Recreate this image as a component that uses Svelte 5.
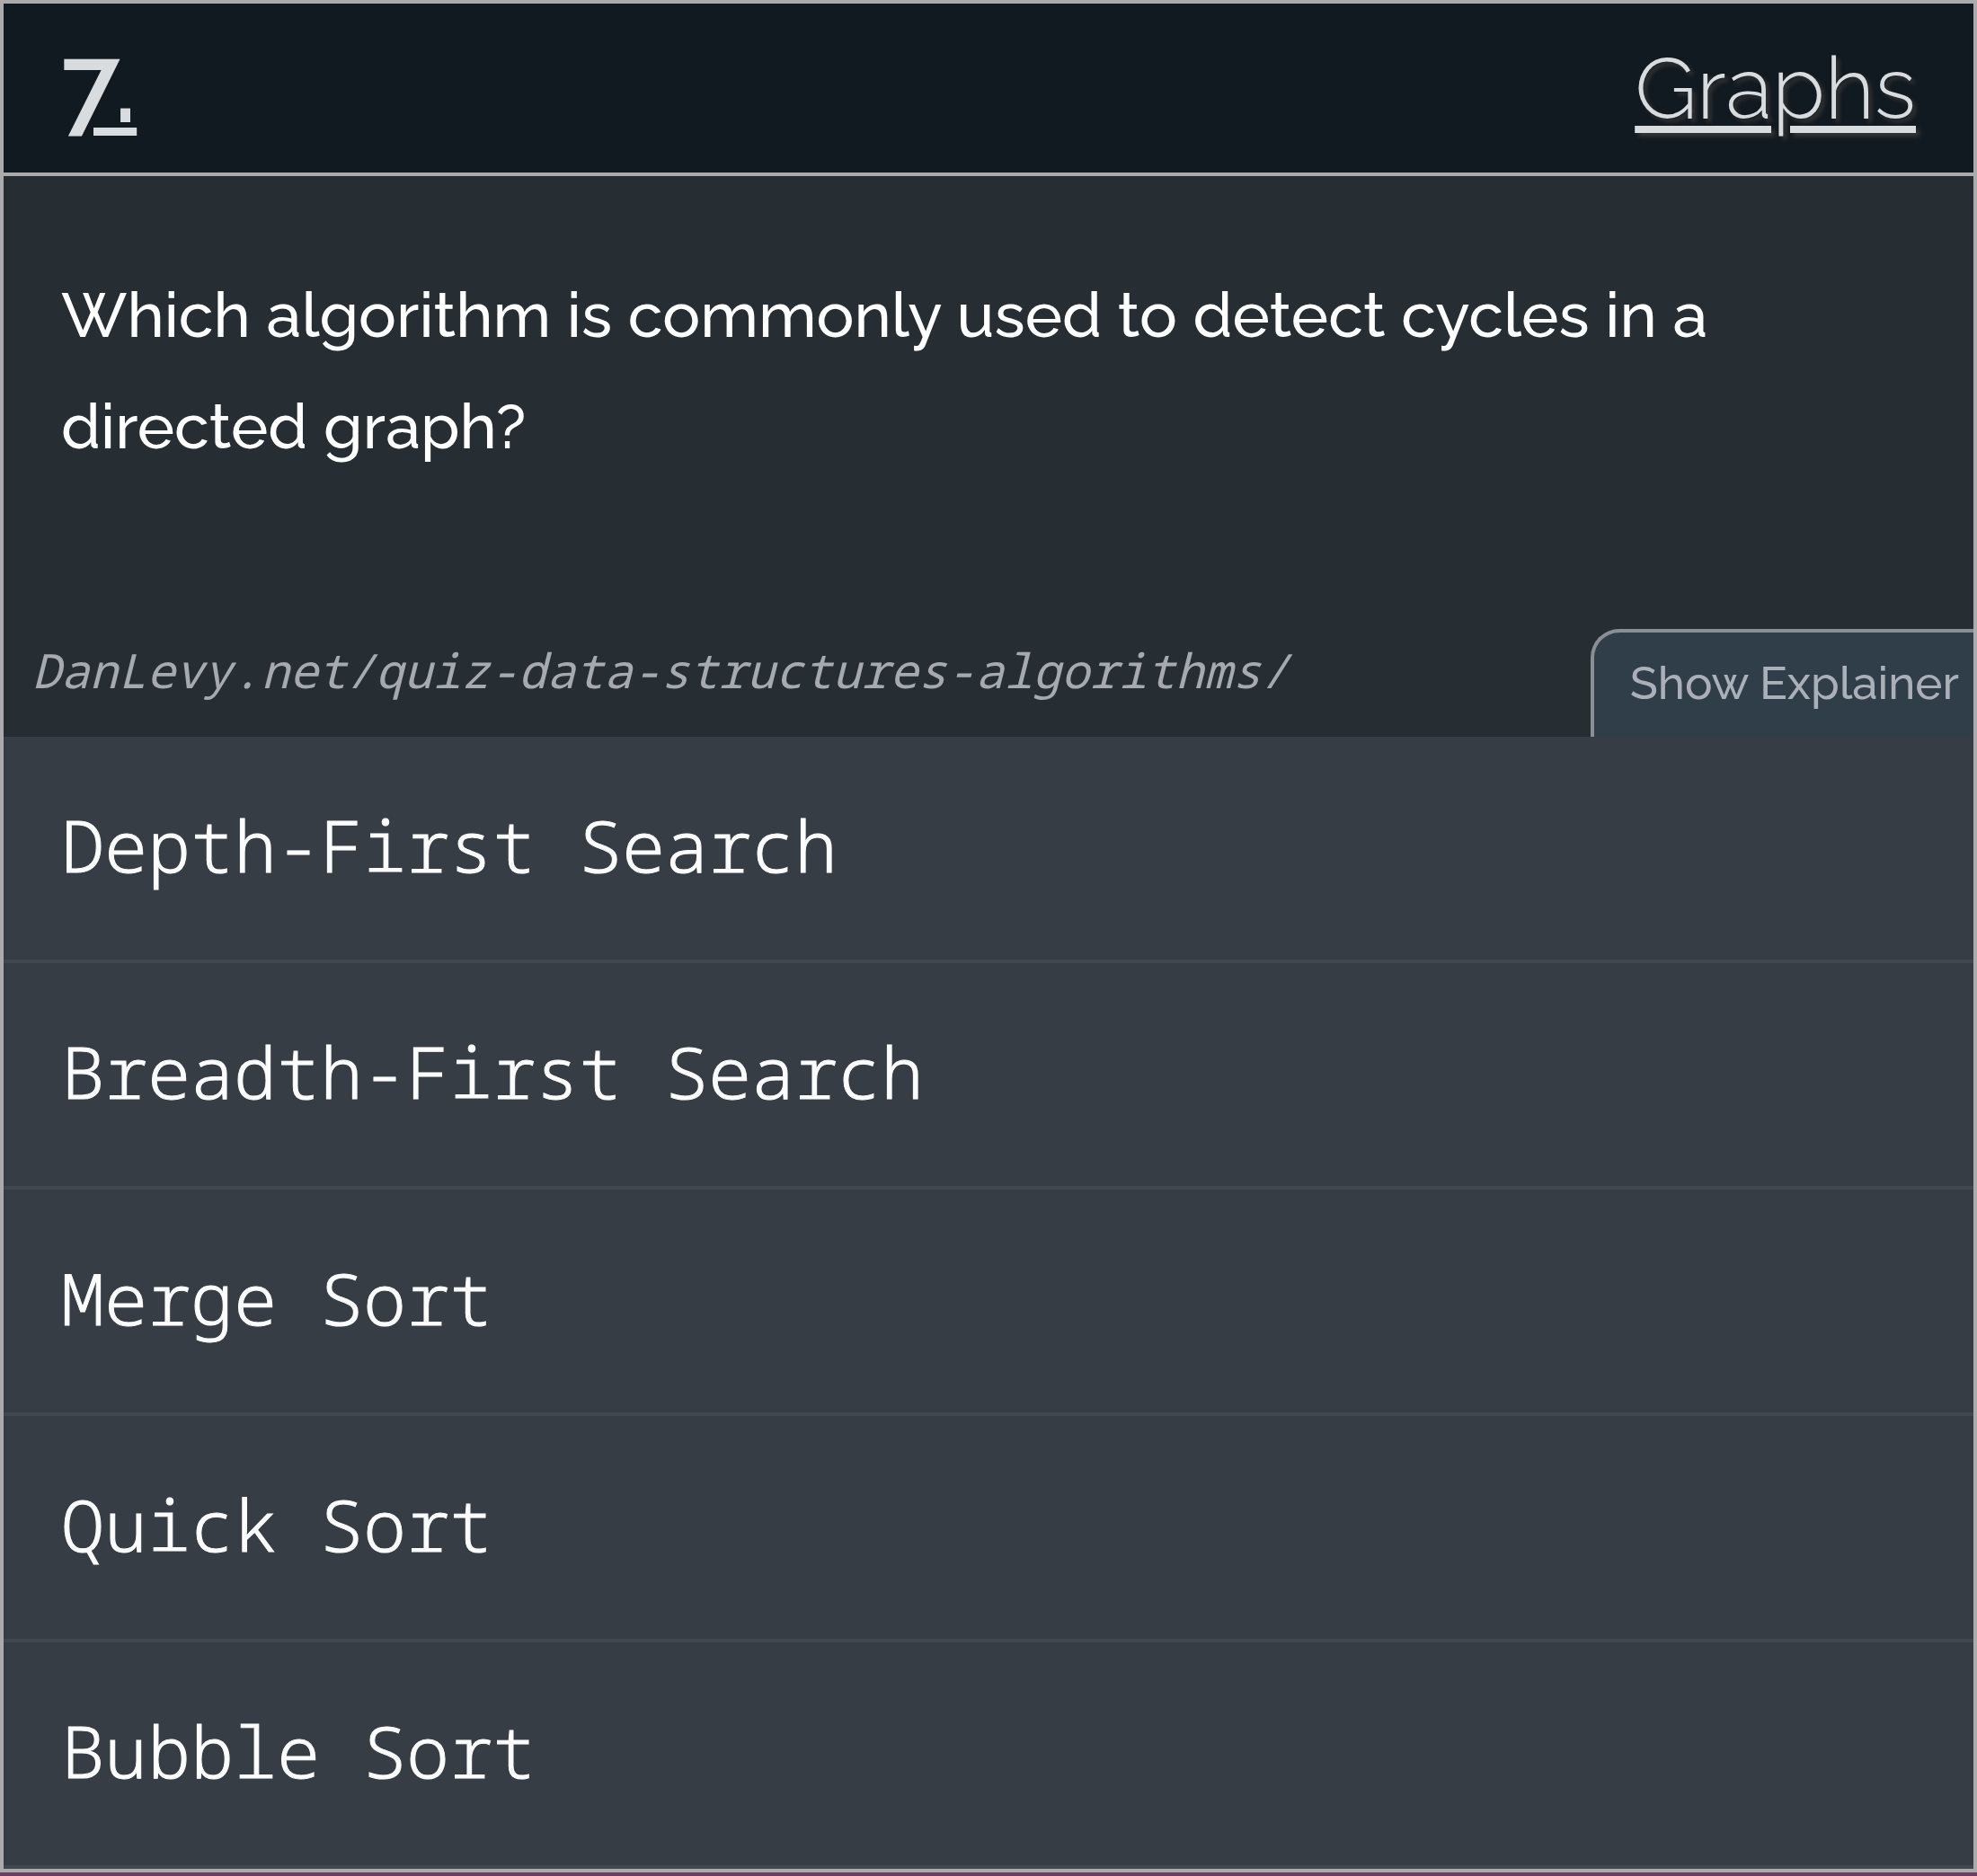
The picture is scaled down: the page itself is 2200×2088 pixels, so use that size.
<script>
  const number = 7;
  const category = 'Graphs';
  const question = 'Which algorithm is commonly used to detect cycles in a directed graph?';
  const source = 'DanLevy.net/quiz-data-structures-algorithms/';
  const answers = [
    'Depth-First Search',
    'Breadth-First Search',
    'Merge Sort',
    'Quick Sort',
    'Bubble Sort'
  ];
</script>

<main class="quiz">
  <header class="bar">
    <a class="number" href="#question">{number}.</a>
    <a class="category" href="#graphs">{category}</a>
  </header>

  <section class="prompt" id="question">
    <h1 class="question">{question}</h1>
    <div class="footer">
      <cite class="source">{source}</cite>
      <button class="explainer" type="button">Show Explainer</button>
    </div>
  </section>

  <ul class="answers">
    {#each answers as answer}
      <li><button class="answer" type="button">{answer}</button></li>
    {/each}
  </ul>
</main>

<style>
  :global(body) {
    margin: 0;
    background: #6b3d64;
  }

  .quiz {
    box-sizing: border-box;
    border: 4px solid #ababab;
    background: #272e33;
    color: #fff;
    font-family: Raleway, Lato, sans-serif;
    font-weight: 500;
  }

  .bar {
    display: flex;
    align-items: center;
    justify-content: space-between;
    height: 188px;
    padding: 0 64px;
    border-bottom: 4px solid #ababab;
    background: #121a21;
  }

  .number,
  .category {
    color: #d9dcdf;
    text-decoration: underline;
    text-decoration-thickness: 8px;
  }

  .number {
    padding-bottom: 8px;
    font-size: 120px;
    font-weight: 600;
    line-height: 144px;
    text-decoration-thickness: 9px;
    text-underline-offset: 6px;
  }

  .category {
    font-size: 96px;
    font-weight: 300;
    line-height: 112px;
    text-shadow: 4px 4px 4px #333;
    text-underline-offset: 8px;
  }

  .question {
    margin: 0;
    padding: 92px 64px 164px;
    font-size: 70px;
    font-weight: 500;
    line-height: 124px;
  }

  .footer {
    display: flex;
    align-items: flex-start;
    justify-content: space-between;
  }

  .source {
    padding: 10px 32px;
    color: #a6a9af;
    font-family: 'Noto Sans Mono', 'Liberation Mono', monospace;
    font-size: 53px;
    font-style: italic;
    font-weight: 400;
    line-height: 72px;
  }

  .explainer {
    padding: 26px 16px 30px 40px;
    border: solid #8b8f93;
    border-width: 4px 0 0 4px;
    border-radius: 32px 0 0 0;
    background: #303e4a;
    color: #abb0b8;
    font: inherit;
    font-size: 51px;
    line-height: 60px;
    cursor: pointer;
  }

  .answers {
    margin: 0;
    padding: 0;
    list-style: none;
  }

  .answer {
    display: block;
    width: 100%;
    padding: 64px 64px 72px;
    border: 0;
    border-bottom: 4px solid #42494e;
    background: #363d44;
    color: #fcfcfd;
    font-family: 'Noto Sans Mono', 'Liberation Mono', monospace;
    font-size: 80px;
    font-weight: 300;
    line-height: 112px;
    text-align: left;
    -webkit-text-stroke: 1px currentColor;
    cursor: pointer;
  }
</style>
